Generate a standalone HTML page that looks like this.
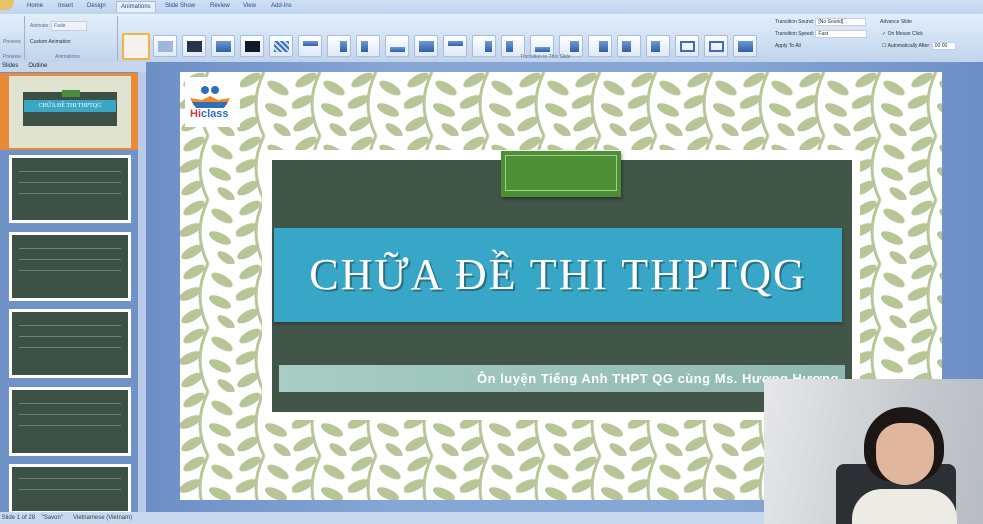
<!DOCTYPE html>
<html><head><meta charset="utf-8"><style>
*{margin:0;padding:0;box-sizing:border-box}
body{width:983px;height:524px;overflow:hidden;position:relative;font-family:"Liberation Sans",sans-serif;background:#5d82b8}
.abs{position:absolute}
.tabs{left:0;top:0;width:983px;height:14px;background:linear-gradient(#cfe0f5,#bfd4ee)}
.tabs span{position:absolute;top:3px;font-size:6px;color:#2a4a7a}
.ribbon{left:0;top:14px;width:983px;height:48px;background:linear-gradient(#e4eefa,#cadcf2 70%,#c0d4ec)}
.ic{position:absolute;top:21px;width:24px;height:22px;border:1px solid #a9bedb;background:linear-gradient(#fff,#dfe9f6);border-radius:2px}
.ic i{position:absolute;left:4px;top:5px;width:15px;height:11px;background:linear-gradient(#6d9ad6,#2f5fa8)}
.lbl{position:absolute;font-size:5px;color:#5a6f90}
.pane{left:0;top:62px;width:146px;height:450px;background:#7192c6}
.th{position:absolute;left:9px;width:122px;background:#fff;padding:3px}
.th div{width:100%;height:100%;background-color:#3c5045;background-image:repeating-linear-gradient(transparent 0 6px,#6a8670 6px 7px,transparent 7px 11px);background-size:88% 55%;background-position:center 25%;background-repeat:no-repeat}
.main{left:146px;top:62px;width:837px;height:450px;background:linear-gradient(90deg,#6d8fc6,#86a6d6 30%,#86a6d6 70%,#6d8fc6)}
.status{left:0;top:512px;width:983px;height:12px;background:#c9d9ef;font-size:6px;color:#344;line-height:12px}
</style></head><body>
<div class="abs tabs">
<div class="abs" style="left:0;top:0;width:14px;height:10px;border-radius:0 0 8px 0;background:#e8c26a"></div>
<span style="left:27px">Home</span><span style="left:58px">Insert</span><span style="left:87px">Design</span>
<span style="left:116px;top:1px;background:#e6effa;border:1px solid #a9bedb;border-bottom:none;padding:2px 4px">Animations</span>
<span style="left:165px">Slide Show</span><span style="left:210px">Review</span><span style="left:243px">View</span><span style="left:271px">Add-Ins</span>
</div>
<div class="abs ribbon">
<div class="lbl" style="left:3px;top:25px">Preview</div>
<div class="lbl" style="left:30px;top:9px">Animate: <span style="background:#eef2f8;border:1px solid #c4cfdf;padding:1px 20px 1px 2px">Fade</span></div>
<div class="lbl" style="left:30px;top:25px;color:#234">Custom Animation</div>
<div class="lbl" style="left:55px;top:40px">Animations</div>
<div class="lbl" style="left:3px;top:40px">Preview</div>
<div class="abs" style="left:24px;top:2px;width:1px;height:44px;background:#aac"></div>
<div class="abs" style="left:117px;top:2px;width:1px;height:44px;background:#aac"></div>
<div class="ic" style="left:122px;top:19px;width:28px;height:27px;border:2px solid #f0b24a;background:#f6f3ec"></div>
<div class="ic" style="left:153px"><i style="background:#9fb7dc"></i></div>
<div class="ic" style="left:182px"><i style="background:#27344a"></i></div>
<div class="ic" style="left:211px"><i></i></div>
<div class="ic" style="left:240px"><i style="background:#121a28"></i></div>
<div class="ic" style="left:269px"><i style="background:repeating-linear-gradient(45deg,#3a6cc0 0 2px,#cfe0f5 2px 4px)"></i></div>
<div class="ic" style="left:298px"><i style="height:5px"></i></div>
<div class="ic" style="left:327px"><i style="width:7px;left:12px"></i></div>
<div class="ic" style="left:356px"><i style="width:7px"></i></div>
<div class="ic" style="left:385px"><i style="height:5px;top:11px"></i></div>
<div class="ic" style="left:414px"><i></i></div>
<div class="ic" style="left:443px"><i style="height:5px"></i></div>
<div class="ic" style="left:472px"><i style="width:7px;left:12px"></i></div>
<div class="ic" style="left:501px"><i style="width:7px"></i></div>
<div class="ic" style="left:530px"><i style="height:5px;top:11px"></i></div>
<div class="ic" style="left:559px"><i style="width:9px;left:10px"></i></div>
<div class="ic" style="left:588px"><i style="width:9px;left:10px"></i></div>
<div class="ic" style="left:617px"><i style="width:9px"></i></div>
<div class="ic" style="left:646px"><i style="width:9px"></i></div>
<div class="ic" style="left:675px"><i style="background:none;border:2px solid #3a6cc0"></i></div>
<div class="ic" style="left:704px"><i style="background:none;border:2px solid #3a6cc0"></i></div>
<div class="ic" style="left:733px"><i></i></div>
<div class="lbl" style="left:520px;top:40px">Transition to This Slide</div>
<div class="lbl" style="left:775px;top:5px;color:#234">Transition Sound: <span style="background:#fff;border:1px solid #c4cfdf;padding:0 22px 0 2px">[No Sound]</span></div>
<div class="lbl" style="left:775px;top:17px;color:#234">Transition Speed: <span style="background:#fff;border:1px solid #c4cfdf;padding:0 38px 0 2px">Fast</span></div>
<div class="lbl" style="left:775px;top:29px;color:#234">Apply To All</div>
<div class="lbl" style="left:880px;top:5px;color:#234">Advance Slide</div>
<div class="lbl" style="left:882px;top:17px;color:#234">✓ On Mouse Click</div>
<div class="lbl" style="left:882px;top:29px;color:#234">☐ Automatically After: <span style="background:#fff;border:1px solid #c4cfdf;padding:0 8px 0 2px">00:00</span></div>
</div>
<div class="abs pane">
<div class="abs" style="left:0;top:0;width:146px;height:10px;background:#c5d7ef;font-size:6px;color:#123;padding:1px 2px">Slides &nbsp;&nbsp;&nbsp;&nbsp; Outline</div>
<div class="abs" style="left:138px;top:10px;width:8px;height:440px;background:#b9cbe6"></div>
<div class="abs" style="left:0;top:11px;width:138px;height:77px;background:#e78b3a"></div>
<div class="abs" style="left:9px;top:14px;width:122px;height:72px;background:#dfe3cf">
<div class="abs" style="left:14px;top:16px;width:94px;height:34px;background:#3c5045"></div>
<div class="abs" style="left:15px;top:24px;width:92px;height:12px;background:#3aa7c4;color:#fff;font-size:6px;text-align:center;line-height:12px;font-family:'Liberation Serif',serif">CHỮA ĐỀ THI THPTQG</div>
<div class="abs" style="left:53px;top:14px;width:18px;height:7px;background:#4d8a3a"></div>
</div>
<div class="th" style="top:93px;height:68px"><div></div></div>
<div class="th" style="top:170px;height:69px"><div></div></div>
<div class="th" style="top:247px;height:69px"><div></div></div>
<div class="th" style="top:325px;height:69px"><div></div></div>
<div class="th" style="top:402px;height:50px"><div></div></div>
</div>
<div class="abs main"></div>
<svg class="abs" style="left:180px;top:72px" width="762" height="428">
<defs><pattern id="p" width="56" height="64" patternUnits="userSpaceOnUse">
<rect width="56" height="64" fill="#fff"/>
<g fill="#b8c596">
<path d="M28 0 Q12 32 28 64" stroke="#b8c596" stroke-width="3" fill="none"/>
<ellipse cx="14" cy="8" rx="12" ry="5" transform="rotate(-30 14 8)"/>
<ellipse cx="42" cy="16" rx="12" ry="5" transform="rotate(30 42 16)"/>
<ellipse cx="10" cy="30" rx="12" ry="5" transform="rotate(-25 10 30)"/>
<ellipse cx="40" cy="38" rx="12" ry="5" transform="rotate(25 40 38)"/>
<ellipse cx="12" cy="52" rx="12" ry="5" transform="rotate(-30 12 52)"/>
<ellipse cx="46" cy="58" rx="10" ry="4.5" transform="rotate(35 46 58)"/>
</g></pattern></defs>
<rect width="762" height="428" fill="url(#p)"/>
<rect x="5" y="5" width="55" height="50" fill="#fff"/>
<path d="M10 26 L22 28 L30 24 L38 28 L50 26 L46 34 L14 34Z" fill="#f08a2a"/>
<path d="M12 30 L48 30 L44 36 L16 36Z" fill="#2e6fb8"/>
<circle cx="25" cy="18" r="4" fill="#2e6fb8"/><circle cx="35" cy="18" r="4" fill="#2e6fb8"/>
<text x="10" y="45" font-family="Liberation Sans" font-weight="bold" font-size="11" fill="#d63a3a">Hi<tspan fill="#2e6fb8">class</tspan></text>
</svg>
<div class="abs" style="left:262px;top:150px;width:598px;height:270px;background:#fff"></div>
<div class="abs" style="left:272px;top:160px;width:580px;height:252px;background:#425549"></div>
<div class="abs" style="left:501px;top:151px;width:120px;height:46px;background:#4c8f35;box-shadow:1px 2px 3px rgba(0,0,0,.4)"><div style="margin:4px;height:36px;border:1px solid #9fcf8a"></div></div>
<div class="abs" style="left:274px;top:228px;width:568px;height:94px;background:#38a7c7;box-shadow:0 2px 3px rgba(0,0,0,.3);color:#fff;font-family:'Liberation Serif',serif;font-size:44px;text-align:center;line-height:94px;letter-spacing:2px;text-shadow:2px 2px 0 #2a6f84">CHỮA ĐỀ THI THPTQG</div>
<div class="abs" style="left:279px;top:365px;width:566px;height:27px;background:linear-gradient(90deg,#a7cdc4,#8fb8b0);color:#fff;font-size:13px;font-weight:bold;text-align:right;padding-right:6px;line-height:27px;letter-spacing:.5px">Ôn luyện Tiếng Anh THPT QG cùng Ms. Hương Hương</div>
<div class="abs status">&nbsp;Slide 1 of 28 &nbsp;&nbsp; "Savon" &nbsp;&nbsp;&nbsp;&nbsp; Vietnamese (Vietnam)</div>
<div class="abs" style="left:764px;top:379px;width:219px;height:145px;overflow:hidden;background:linear-gradient(100deg,#e6e7e9,#c7cbcf 60%,#b7bcc1)">
<div class="abs" style="left:72px;top:85px;width:120px;height:60px;background:#2c2f33;border-radius:8px 8px 0 0"></div>
<div class="abs" style="left:100px;top:28px;width:80px;height:75px;border-radius:40px 40px 30px 30px;background:#1c1714"></div>
<div class="abs" style="left:112px;top:44px;width:58px;height:62px;border-radius:25px 25px 30px 30px;background:#e0b79c"></div>
<div class="abs" style="left:88px;top:110px;width:105px;height:40px;border-radius:30px 30px 0 0;background:#ecebe4"></div>
</div>
</body></html>
